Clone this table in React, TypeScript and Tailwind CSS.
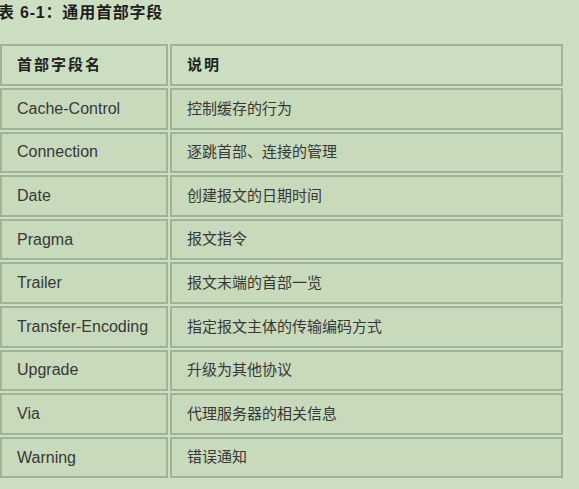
const rows: [string, string][] = [
  ["Cache-Control", "控制缓存的行为"],
  ["Connection", "逐跳首部、连接的管理"],
  ["Date", "创建报文的日期时间"],
  ["Pragma", "报文指令"],
  ["Trailer", "报文末端的首部一览"],
  ["Transfer-Encoding", "指定报文主体的传输编码方式"],
  ["Upgrade", "升级为其他协议"],
  ["Via", "代理服务器的相关信息"],
  ["Warning", "错误通知"],
];

const font = { fontFamily: '"Liberation Sans", "Noto Sans CJK SC", sans-serif' };

export default function App() {
  return (
    <div className="w-[579px] h-[489px] overflow-hidden bg-[#cddfc3] text-[#2b2b2b]" style={font}>
      <div className="-ml-[2px] pt-[1px] h-[42px] text-[16px] font-bold tracking-[0.8px] text-[#1e1e1e]">
        表 6-1：通用首部字段
      </div>
      <table className="border-separate border-spacing-[2px] -ml-[2px] w-[567px]">
        <tbody>
          <tr>
            <th className="w-[168px] h-[42px] border-2 border-[#9fb495] bg-[#cbdec1] text-left pl-[15px] text-[15px] font-bold text-[#222] tracking-[2px]">
              首部字段名
            </th>
            <th className="h-[42px] border-2 border-[#9fb495] bg-[#cbdec1] text-left pl-[15px] text-[15px] font-bold text-[#222] tracking-[2px]">
              说明
            </th>
          </tr>
          {rows.map(([name, desc]) => (
            <tr key={name}>
              <td className="h-[41.6px] border-2 border-[#9fb495] bg-[#c7dabc] pl-[15px] text-[16px] text-[#383838]">
                {name}
              </td>
              <td className="h-[41.6px] border-2 border-[#9fb495] bg-[#c7dabc] pl-[15px] text-[15px] text-[#383838]">
                {desc}
              </td>
            </tr>
          ))}
        </tbody>
      </table>
    </div>
  );
}
